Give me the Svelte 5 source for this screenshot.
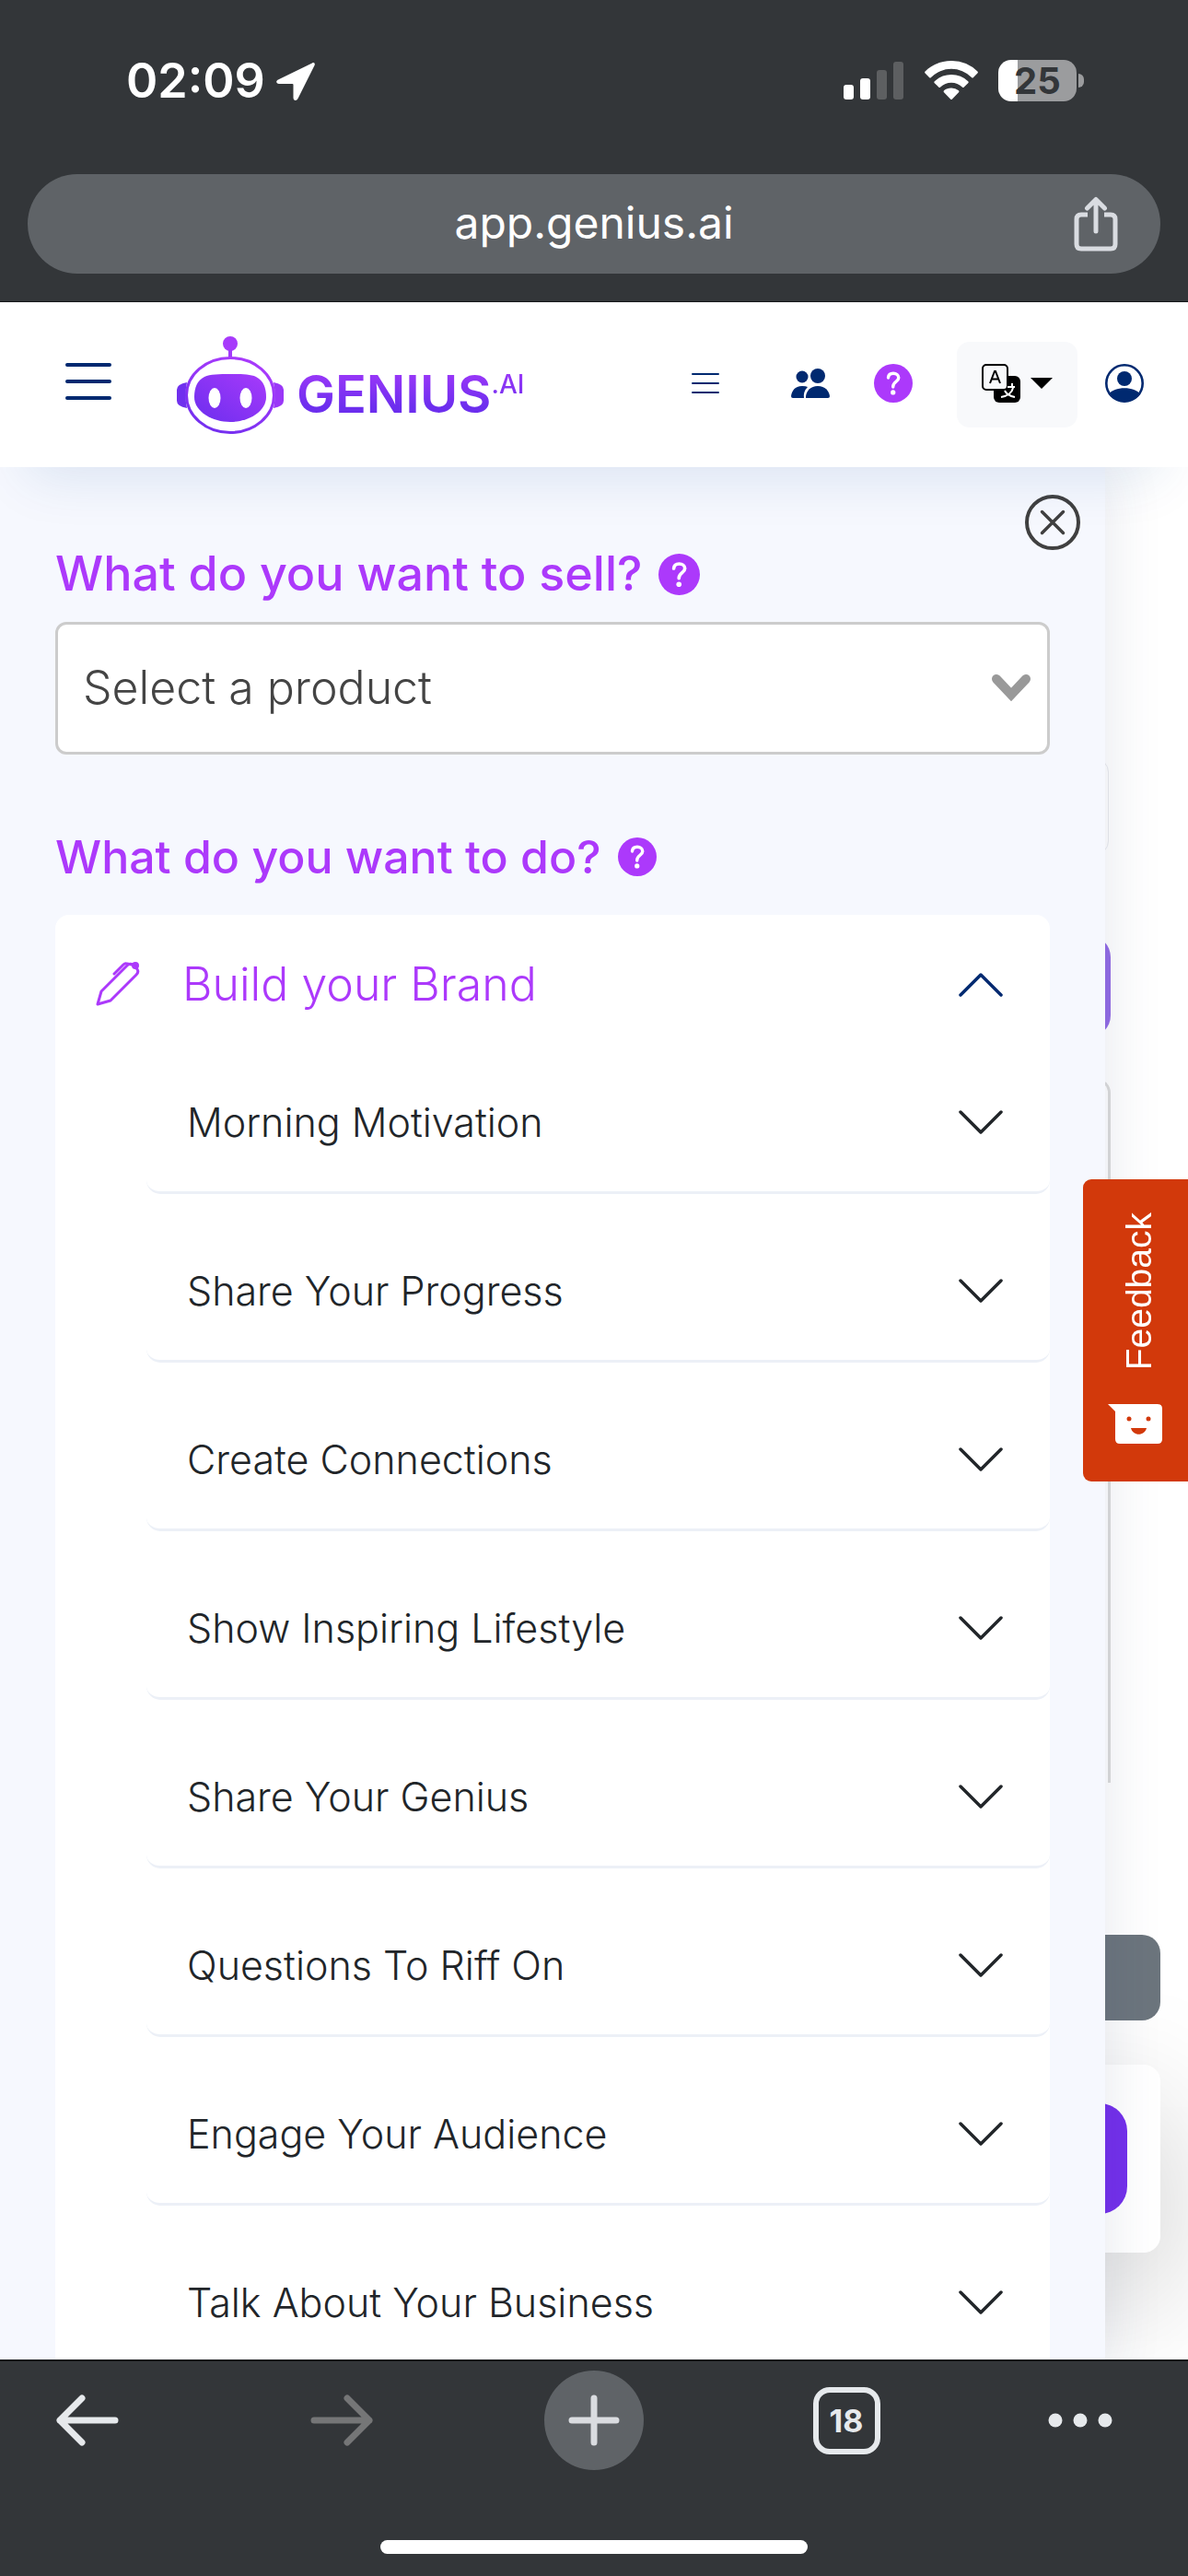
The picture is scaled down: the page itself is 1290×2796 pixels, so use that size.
<script lang="ts">
    const topics: string[] = [
        "Morning Motivation",
        "Share Your Progress",
        "Create Connections",
        "Show Inspiring Lifestyle",
        "Share Your Genius",
        "Questions To Riff On",
        "Engage Your Audience",
        "Talk About Your Business",
    ];

    let brandOpen: boolean = $state(true);
</script>

{#snippet help(label: string, size: string)}
    <button class="iconButton" aria-label={label}>
        <svg class="help {size}" viewBox="0 0 16 16">
            <circle cx="8" cy="8" r="8" fill="#ac39fb" />
            <path
                d="M5.900 5.700C6 4.400 6.800 3.900 8 3.900c1.200 0 2.200.7 2.200 1.800 0 1.600-2.300 1.700-2.300 3.600v.2"
                fill="none"
                stroke="#fff"
                stroke-width="1.300"
                stroke-linecap="round"
            />
            <circle cx="7.900" cy="11.800" r="1" fill="#fff" />
        </svg>
    </button>
{/snippet}

{#snippet chevron(up: boolean)}
    <svg class="chevron" class:up viewBox="0 0 48 27" fill="none">
        <path
            d="M2 2l22 22L46 2"
            stroke="currentColor"
            stroke-width="3.500"
            stroke-linecap="round"
            stroke-linejoin="round"
        />
    </svg>
{/snippet}

<div class="screen">
    <div class="browserTop">
        <div class="statusBar">
            <div class="clock">
                <span>02:09</span>
                <svg width="42" height="42" viewBox="0 0 42 42">
                    <path
                        d="M39 1.400 2 19.400c-3 1.600-2 4.600 1 4.600h14.500q1 0 1 1v14c0 3.500 3.500 4 5 1L41.500 4c1-2.400-.6-3.600-2.500-2.600z"
                        fill="#fff"
                    />
                </svg>
            </div>
            <div class="signals">
                <svg width="66" height="42" viewBox="0 0 66 42">
                    <rect x="0" y="25" width="11" height="16" rx="3" fill="#fff" />
                    <rect x="18" y="18" width="11" height="23" rx="3" fill="#fff" />
                    <rect x="36" y="9" width="11" height="32" rx="3" fill="#5d5f61" />
                    <rect x="54" y="0" width="11" height="41" rx="3" fill="#5d5f61" />
                </svg>
                <svg width="58" height="43" viewBox="0 0 58 43">
                    <g fill="#fff">
                        <path d="M29 0C18 0 7.800 4.300.6 11.500q-1 1 0 2L5 18q1 1 2 0a31 31 0 0 1 44 0q1 1 2 0l4.400-4.500q1-1 0-2A40 40 0 0 0 29 0z" />
                        <path d="M29 15c-7 0-13.400 2.700-18.200 7.200q-1 1 0 2l4.400 4.300q1 1 2 0a17 17 0 0 1 23.600 0q1 1 2 0l4.400-4.300q1-1 0-2A26.500 26.500 0 0 0 29 15z" />
                        <path d="M29 29.500c-3 0-5.800 1-8 2.700q-1 1 0 2l7 7.300q1 1 2 0l7-7.300q1-1 0-2a13 13 0 0 0-8-2.700z" />
                    </g>
                </svg>
                <div class="battery"><span>25</span></div>
            </div>
        </div>
        <div class="addressBar">
            <span class="url">app.genius.ai</span>
            <button class="iconButton share" aria-label="Share">
                <svg width="48" height="60" viewBox="0 0 48 60" fill="none" stroke="#d9dce1" stroke-width="5" stroke-linecap="round" stroke-linejoin="round">
                    <path d="M15 20H8q-5 0-5 5v27q0 5 5 5h32q5 0 5-5V25q0-5-5-5h-7" stroke-linecap="butt" />
                    <path d="M24 38V4M14.500 13 24 3.500 33.500 13" />
                </svg>
            </button>
        </div>
    </div>

    <header class="appBar">
        <button class="iconButton menu" aria-label="Open menu">
            <svg width="50" height="42" viewBox="0 0 50 42" stroke="#002970" stroke-width="4" stroke-linecap="round">
                <path d="M2 3h46M2 21h46M2 39h46" />
            </svg>
        </button>
        <a class="logo" href="#home" aria-label="Genius.AI home">
            <svg width="116" height="106" viewBox="0 0 116 106">
                <defs>
                    <linearGradient id="robot" x1="0" y1="1" x2=".5" y2="0">
                        <stop offset="0" stop-color="#6c2eee" />
                        <stop offset="1" stop-color="#a73afb" />
                    </linearGradient>
                    <linearGradient id="visor" x1="0" y1="1" x2="1" y2="0">
                        <stop offset="0" stop-color="#6c2eee" />
                        <stop offset="1" stop-color="#a73afb" />
                    </linearGradient>
                </defs>
                <circle cx="58" cy="8" r="8" fill="#a73afb" />
                <path d="M58 14v10" stroke="#a23afb" stroke-width="4" />
                <ellipse cx="58" cy="64" rx="47.500" ry="40.500" fill="none" stroke="url(#robot)" stroke-width="3" />
                <path d="M11 50Q0 52 0 58v12q0 6 11 8-3-14 0-28z" fill="#7030ee" />
                <path d="M105 50q11 2 11 8v12q0 6-11 8 3-14 0-28z" fill="#9a37f7" />
                <path
                    d="M58 41c12 0 22 0 28 3 8 4 11 12 11 22 0 16-20 27-39 27S19 82 19 66c0-10 3-18 11-22 6-3 16-3 28-3z"
                    fill="url(#visor)"
                />
                <ellipse cx="41" cy="67" rx="6.500" ry="11" fill="#fff" />
                <ellipse cx="75" cy="67" rx="6.500" ry="11" fill="#fff" />
            </svg>
            <span class="wordmark">GENIUS<sup>.AI</sup></span>
        </a>
        <nav class="actions">
            <button class="iconButton" aria-label="List">
                <svg width="30" height="24" viewBox="0 0 30 24" stroke="#002970" stroke-width="2" stroke-linecap="round">
                    <path d="M1 2h28M1 12h28M1 22h28" />
                </svg>
            </button>
            <button class="iconButton team" aria-label="Team">
                <svg width="42" height="32" viewBox="0 0 42 32" fill="#002970">
                    <circle cx="12" cy="9" r="6.500" />
                    <circle cx="29" cy="8" r="8" />
                    <path d="M16 32h24q2 0 2-2c-1-6-5-11-13-11s-12 5-13 11q0 2 0 2z" />
                    <path d="M14 32H2q-2 0-2-2c1-6 4-11 12-11q4 0 6 1-5 5-4 12z" />
                </svg>
            </button>
            {@render help("Help", "small")}
            <button class="language" aria-label="Language">
                <svg width="42" height="42" viewBox="0 0 42 42" fill="none">
                    <rect x="13" y="13" width="29" height="29" rx="6" fill="#000" />
                    <rect x="1" y="1" width="27" height="27" rx="4" fill="#f8f9fb" stroke="#000" stroke-width="2" />
                    <path d="M9 21l5-13h1l5 13M11 16.500h7" stroke="#000" stroke-width="2" />
                    <path d="M28 25h8M33 21v4M34 26c-1 5-6 9-13 10M25 29c2 4 6 6 11 7" stroke="#fff" stroke-width="2" />
                </svg>
                <svg width="24" height="12" viewBox="0 0 24 12"><path d="M0 0h24L12 12z" /></svg>
            </button>
            <button class="iconButton" aria-label="Account">
                <svg width="42" height="42" viewBox="0 0 42 42">
                    <circle cx="21" cy="16" r="8" fill="#002970" />
                    <path d="M4 33c5-9 29-9 34 0-8 11-26 11-34 0z" fill="#002970" />
                    <circle cx="21" cy="21" r="19.700" fill="none" stroke="#002970" stroke-width="2.600" />
                </svg>
            </button>
        </nav>
    </header>

    <main>
        <aside class="drawer">
            <button class="iconButton close" aria-label="Close">
                <svg width="60" height="60" viewBox="0 0 60 60" fill="none" stroke="#404040" stroke-linecap="round">
                    <circle cx="30" cy="30" r="28" stroke-width="4" />
                    <path d="M18.500 18.500l23 23M41.500 18.500l-23 23" stroke-width="3.500" />
                </svg>
            </button>

            <div class="question sell">
                <label for="product">What do you want to sell?</label>
                {@render help("About products", "large")}
            </div>
            <div class="selectWrap">
                <select id="product">
                    <option>Select a product</option>
                </select>
                <svg width="42" height="30" viewBox="0 0 42 30">
                    <path d="M5 5l16 17L37 5" fill="none" stroke="#999" stroke-width="10" stroke-linecap="round" />
                </svg>
            </div>

            <div class="question todo">
                <h2>What do you want to do?</h2>
                {@render help("About actions", "small")}
            </div>
            <section class="card">
                <button class="cardHead" aria-expanded={brandOpen} onclick={() => (brandOpen = !brandOpen)}>
                    <svg width="48" height="48" viewBox="0 0 48 48" fill="none" stroke="#ac39fb" stroke-width="3" stroke-linejoin="round" stroke-linecap="round">
                        <path d="M2 46l4-14L34 4q3-3 6-1l5 5q2 3-1 6L16 42z" />
                        <path d="M20 13l10-10q2-2 4-1l5 1" />
                        <circle cx="43" cy="4" r="2.500" fill="#ac39fb" />
                    </svg>
                    <span>Build your Brand</span>
                    {@render chevron(brandOpen)}
                </button>
                {#if brandOpen}
                    <div class="topics">
                        {#each topics as topic}
                            <button class="topic">
                                <span>{topic}</span>
                                {@render chevron(false)}
                            </button>
                        {/each}
                    </div>
                {/if}
            </section>
        </aside>

        <!-- sliver of the page that stays visible beside the open drawer -->
        <div class="behind">
            <div class="summary"></div>
            <div class="pill"></div>
            <div class="editor"></div>
            <div class="greyButton"></div>
            <div class="footerCard"><div class="submit"></div></div>
        </div>

        <button class="feedback">
            <span>Feedback</span>
            <svg width="59" height="43" viewBox="0 0 59 43">
                <path d="M0 0h54q5 0 5 5v33q0 5-5 5H13q-5 0-5-5V8z" fill="#fff" />
                <circle cx="23" cy="16" r="2.500" fill="#d2390b" />
                <circle cx="44" cy="16" r="2.500" fill="#d2390b" />
                <path d="M25 26h17c-2 9-15 9-17 0z" fill="#d2390b" />
            </svg>
        </button>
    </main>

    <footer class="browserBottom">
        <div class="toolbar">
            <button class="iconButton back" aria-label="Back">
                <svg width="68" height="56" viewBox="0 0 68 56" fill="none" stroke="#e6e9ec" stroke-width="7" stroke-linecap="round" stroke-linejoin="round">
                    <path d="M64 28H4M28 4 4 28l24 24" />
                </svg>
            </button>
            <button class="iconButton" aria-label="Forward" disabled>
                <svg width="68" height="56" viewBox="0 0 68 56" fill="none" stroke="#757677" stroke-width="7" stroke-linecap="round" stroke-linejoin="round">
                    <path d="M4 28h60M40 4l24 24-24 24" />
                </svg>
            </button>
            <button class="iconButton newTab" aria-label="New tab">
                <svg width="56" height="56" viewBox="0 0 56 56" stroke="#dadce0" stroke-width="7" stroke-linecap="round">
                    <path d="M28 4v48M4 28h48" />
                </svg>
            </button>
            <button class="iconButton tabs" aria-label="Open tabs"><span>18</span></button>
            <button class="iconButton" aria-label="More">
                <svg width="70" height="16" viewBox="0 0 70 16" fill="#e6e9ec">
                    <circle cx="8" cy="8" r="7.500" />
                    <circle cx="35" cy="8" r="7.500" />
                    <circle cx="62" cy="8" r="7.500" />
                </svg>
            </button>
        </div>
        <div class="homeIndicator"></div>
    </footer>
</div>

<style>
    :global(body) {
        margin: 0;
    }

    .screen {
        height: 100vh;
        display: flex;
        flex-direction: column;
        background-color: #fff;
        font-family: Inter, "Liberation Sans", sans-serif;
        color: #212529;
    }

    .screen :global(*) {
        box-sizing: border-box;
    }

    button,
    select {
        margin: 0;
        font-family: inherit;
        color: inherit;
    }

    button {
        cursor: pointer;
    }

    svg {
        display: block;
        flex: none;
    }

    .iconButton {
        padding: 0;
        border: none;
        background: none;
        display: flex;
        align-items: center;
        justify-content: center;
    }

    /* browser chrome, top */
    .browserTop {
        flex: none;
        height: 328px;
        padding: 0 30px;
        background-color: #333639;
        border-bottom: 1px solid #15171a;
    }

    .statusBar {
        height: 189px;
        padding: 0 91px 14px 107px;
        display: flex;
        align-items: center;
        justify-content: space-between;
        color: #fff;
    }

    .clock {
        display: flex;
        align-items: center;
        gap: 12px;
        font-size: 52px;
        font-weight: 600;
    }

    .signals {
        display: flex;
        align-items: center;
        gap: 22px;
    }

    .battery {
        position: relative;
        width: 85px;
        height: 45px;
        border-radius: 14px;
        background: linear-gradient(to right, #fff 25%, #9b9c9e 25%);
        color: #333639;
        font-size: 40px;
        font-weight: 700;
        line-height: 45px;
        text-align: center;
    }

    .battery::after {
        content: "";
        position: absolute;
        left: 87px;
        top: 15px;
        width: 6px;
        height: 15px;
        border-radius: 0 6px 6px 0;
        background-color: #9b9c9e;
    }

    .addressBar {
        height: 108px;
        padding: 0 46px;
        border-radius: 54px;
        background-color: #5f6367;
        display: grid;
        grid-template-columns: 48px 1fr 48px;
        align-items: center;
    }

    .url {
        grid-column: 2;
        padding-bottom: 4px;
        color: #fff;
        font-size: 48px;
        text-align: center;
    }

    /* app header */
    .appBar {
        position: relative;
        z-index: 3;
        flex: none;
        height: 179px;
        padding: 0 48px 0 71px;
        background-color: #fff;
        box-shadow: 0 40px 60px -30px rgba(20, 70, 150, 0.12);
        display: flex;
        align-items: center;
    }

    .menu {
        padding-bottom: 8px;
    }

    .logo {
        margin-left: 71px;
        display: flex;
        align-items: center;
        gap: 14px;
        text-decoration: none;
    }

    .wordmark {
        padding-top: 20px;
        font-size: 56px;
        font-weight: 600;
        line-height: 60px;
        background: linear-gradient(to top, #6c2eee 20%, #a73afb 80%);
        background-clip: text;
        color: transparent;
    }

    .wordmark sup {
        font-size: 28px;
        font-weight: 500;
        line-height: 0;
        vertical-align: 21px;
    }

    .actions {
        margin-left: auto;
        display: flex;
        align-items: center;
    }

    .actions .iconButton {
        padding-bottom: 4px;
    }

    .team {
        margin: 0 48px 0 78px;
    }

    .help.small {
        width: 42px;
        height: 42px;
    }

    .help.large {
        width: 45px;
        height: 45px;
    }

    .language {
        width: 131px;
        height: 93px;
        margin: 0 30px 0 48px;
        padding: 0 27px 4px;
        border: none;
        border-radius: 14px;
        background-color: #f8f9fb;
        display: flex;
        align-items: center;
        justify-content: space-between;
    }

    /* drawer and what lies beside it */
    main {
        position: relative;
        flex: 1;
        min-height: 0;
        overflow: hidden;
        display: grid;
        grid-template-columns: 1fr 90px;
    }

    .drawer {
        position: relative;
        z-index: 2;
        padding: 0 60px;
        background-color: #f6f8fe;
        box-shadow: 0 0 60px rgba(40, 60, 110, 0.12);
    }

    .close {
        position: absolute;
        top: 30px;
        right: 27px;
    }

    .question {
        display: flex;
        align-items: center;
        gap: 18px;
        color: #ac39fb;
        line-height: 64px;
    }

    .question label,
    .question h2 {
        margin: 0;
        font-weight: 500;
    }

    .sell {
        padding-top: 84px;
        font-size: 52px;
    }

    .todo {
        padding-top: 79px;
    }

    .todo h2 {
        font-size: 50px;
    }

    .selectWrap {
        position: relative;
        margin-top: 20px;
    }

    select {
        display: block;
        width: 100%;
        height: 144px;
        padding: 0 80px 2px 27px;
        border: 3px solid #ccc;
        border-radius: 12px;
        background-color: #fff;
        color: #444;
        appearance: none;
        font-size: 50px;
        font-weight: 300;
    }

    .selectWrap svg {
        position: absolute;
        right: 21px;
        top: 57px;
        pointer-events: none;
    }

    .card {
        margin-top: 31px;
        border-radius: 15px;
        background-color: #fff;
    }

    .cardHead {
        width: 100%;
        height: 150px;
        padding: 0 51px 0 44px;
        border: none;
        background: none;
        display: flex;
        align-items: center;
        gap: 46px;
        color: #ac39fb;
        font-size: 50px;
        font-weight: 300;
    }

    .chevron {
        width: 48px;
        height: 27px;
        margin-left: auto;
    }

    .chevron.up {
        color: #002970;
        transform: rotate(180deg);
    }

    .topics {
        padding-left: 99px;
        display: flex;
        flex-direction: column;
        gap: 30px;
    }

    .topic {
        height: 153px;
        padding: 0 51px 0 44px;
        border: none;
        border-bottom: 3px solid #ecf0f7;
        border-radius: 15px;
        background-color: #fff;
        display: flex;
        align-items: center;
        font-size: 43px;
        font-weight: 300;
    }

    .behind > div {
        margin-left: -60px;
    }

    .summary {
        height: 105px;
        margin-top: 316px;
        margin-right: 86px;
        border: 1px solid #e9ebef;
        border-radius: 15px;
    }

    .pill {
        height: 111px;
        margin-top: 87px;
        margin-right: 84px;
        border-radius: 24px;
        background-color: #936ce6;
    }

    .editor {
        height: 764px;
        margin-top: 45px;
        margin-right: 84px;
        border: 3px solid #dcdcdc;
        border-bottom: none;
        border-radius: 15px 15px 0 0;
    }

    .greyButton {
        position: relative;
        z-index: 1;
        height: 93px;
        margin-top: 165px;
        margin-right: 30px;
        border-radius: 20px;
        background-color: #6c757d;
    }

    .footerCard {
        height: 204px;
        margin-top: 48px;
        margin-right: 30px;
        padding: 42px 36px 42px 0;
        border-radius: 18px;
        background-color: #fff;
        box-shadow: 0 48px 144px rgba(0, 0, 0, 0.22);
    }

    .submit {
        height: 120px;
        border-radius: 30px;
        background-color: #7430ec;
    }

    .feedback {
        position: absolute;
        z-index: 4;
        right: 0;
        top: 773px;
        width: 114px;
        height: 328px;
        padding: 36px 28px 41px 27px;
        border: none;
        border-radius: 9px 0 0 9px;
        background-color: #d2390b;
        color: #fff;
        display: flex;
        flex-direction: column;
        align-items: center;
        justify-content: space-between;
        font-family: "Liberation Sans", Arial, sans-serif;
        font-size: 39px;
    }

    .feedback span {
        padding-right: 8px;
        writing-mode: vertical-rl;
        transform: rotate(180deg);
    }

    /* browser chrome, bottom */
    .browserBottom {
        flex: none;
        height: 235px;
        padding-bottom: 24px;
        background-color: #333639;
        border-top: 2px solid #15171a;
        display: flex;
        flex-direction: column;
        justify-content: space-between;
        align-items: center;
    }

    .toolbar {
        width: 100%;
        height: 128px;
        display: grid;
        grid-template-columns: 234px 1fr 1fr 1fr 234px;
        align-items: center;
        justify-items: center;
    }

    .back {
        justify-self: start;
        padding-left: 61px;
    }

    .newTab {
        width: 108px;
        height: 108px;
        border-radius: 50%;
        background-color: #5f6367;
    }

    .tabs {
        width: 73px;
        height: 73px;
        border: 6px solid #e6e9ec;
        border-radius: 18px;
        color: #e6e9ec;
        font-size: 34px;
        font-weight: 700;
    }

    .homeIndicator {
        width: 36%;
        height: 15px;
        border-radius: 8px;
        background-color: #fff;
    }
</style>
